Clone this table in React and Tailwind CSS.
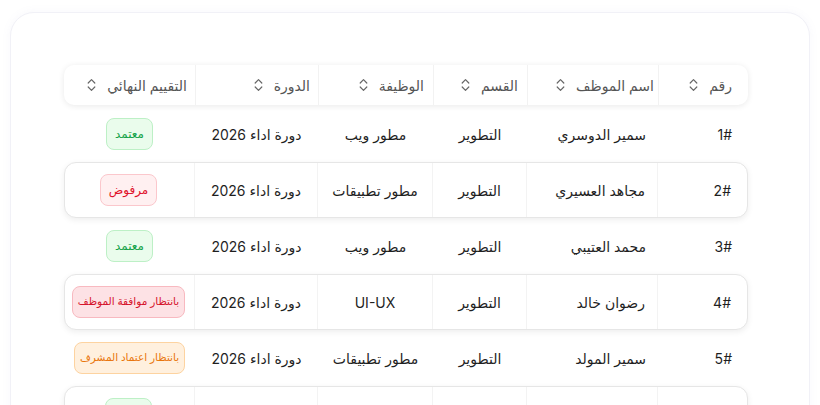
import { useState } from "react";

const rows = [
  { id: 1, name: "سمير الدوسري", dept: "التطوير", job: "مطور ويب", cycle: "دورة اداء 2026", status: "approved" },
  { id: 2, name: "مجاهد العسيري", dept: "التطوير", job: "مطور تطبيقات", cycle: "دورة اداء 2026", status: "rejected" },
  { id: 3, name: "محمد العتيبي", dept: "التطوير", job: "مطور ويب", cycle: "دورة اداء 2026", status: "approved" },
  { id: 4, name: "رضوان خالد", dept: "التطوير", job: "UI-UX", cycle: "دورة اداء 2026", status: "employee" },
  { id: 5, name: "سمير المولد", dept: "التطوير", job: "مطور تطبيقات", cycle: "دورة اداء 2026", status: "supervisor" },
  // last row is only peeking in at the bottom edge
  { id: 6, name: "", dept: "", job: "", cycle: "", status: "approved" },
];

const badges = {
  approved: { label: "معتمد", cls: "bg-[#eafcec] border-[#bdf0c6] text-[#16a34a] text-[12px] px-[8px]" },
  rejected: { label: "مرفوض", cls: "bg-[#fff0f1] border-[#fbc7cc] text-[#e0112b] text-[12px] px-[8px]" },
  employee: { label: "بانتظار موافقة الموظف", cls: "bg-[#fde2e5] border-[#f8b9c0] text-[#d6142c] text-[10.5px] px-[5px]" },
  supervisor: { label: "بانتظار اعتماد المشرف", cls: "bg-[#fff0de] border-[#fdd3a0] text-[#e9760c] text-[10.5px] px-[5px]" },
};

const headers = [
  { label: "رقم", pad: "pr-4" },
  { label: "اسم الموظف", pad: "pr-[4px]" },
  { label: "القسم", pad: "pr-[9px]" },
  { label: "الوظيفة", pad: "pr-[9px]" },
  { label: "الدورة", pad: "pr-2" },
  { label: "التقييم النهائي", pad: "pr-2" },
];

function SortIcon() {
  return (
    <svg width="9" height="14" viewBox="0 0 9 14" fill="none" stroke="#666" strokeWidth="1.2" strokeLinecap="round" strokeLinejoin="round">
      <path d="M1.2 5 L4.5 1.7 L7.8 5" />
      <path d="M1.2 9 L4.5 12.3 L7.8 9" />
    </svg>
  );
}

function Badge({ status }) {
  const b = badges[status];
  return (
    <span className={`inline-flex items-center h-[32px] whitespace-nowrap rounded-[8px] border font-medium ${b.cls}`}>
      {b.label}
    </span>
  );
}

export default function App() {
  const [sortKey, setSortKey] = useState(null);
  const cols = "grid grid-cols-[90px_131px_94px_115px_123px_131px]";

  return (
    <div
      dir="rtl"
      className="w-[820px] h-[405px] overflow-hidden bg-white text-[#1f1f1f]"
      style={{ fontFamily: 'Inter, "DejaVu Sans", sans-serif' }}
    >
      <div className="mt-[12px] mx-[10px] h-[420px] rounded-[24px] border border-[#f1f1f7] bg-white shadow-[0_0_10px_rgba(120,120,180,0.06)] pt-[52px] pr-[61px] pl-[53px]">
        {/* HEADER */}
        <div className={`${cols} h-[40px] rounded-[10px] bg-white shadow-[0_1px_6px_rgba(0,0,0,0.09)]`}>
          {headers.map((h, i) => (
            <button
              key={h.label}
              onClick={() => setSortKey(i)}
              className={`flex items-center gap-[11px] text-[14px] text-[#555] ${h.pad} ${
                i < headers.length - 1 ? "border-l border-[#f2f2f2]" : ""
              } ${sortKey === i ? "text-[#222]" : ""}`}
            >
              <span>{h.label}</span>
              <SortIcon />
            </button>
          ))}
        </div>

        {/* ROWS */}
        <div className="flex flex-col mt-px">
          {rows.map((r) => {
            const boxed = r.id % 2 === 0;
            const cell = boxed ? "border-l border-[#f3f3f3]" : "";
            return (
              <div
                key={r.id}
                className={`${cols} h-[56px] shrink-0 text-[14px] ${
                  boxed ? "rounded-[12px] border border-[#e6e6e6] bg-white shadow-[0_2px_6px_rgba(0,0,0,0.07)]" : ""
                }`}
              >
                <div className={`flex items-center pr-4 ${cell}`}>
                  {r.name && <span dir="ltr">{r.id}#</span>}
                </div>
                <div className={`flex items-center pr-3 ${cell}`}>{r.name}</div>
                <div className={`flex items-center justify-center ${cell}`}>{r.dept}</div>
                <div className={`flex items-center justify-center ${cell}`}>{r.job}</div>
                <div className={`flex items-center justify-center ${cell}`}>{r.cycle}</div>
                <div className="flex items-center justify-center">
                  <Badge status={r.status} />
                </div>
              </div>
            );
          })}
        </div>
      </div>
    </div>
  );
}
